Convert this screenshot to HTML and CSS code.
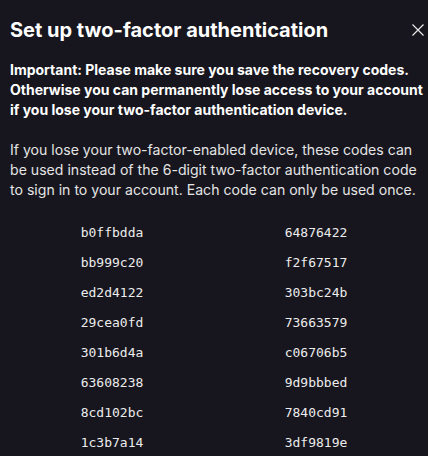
FILE: index.html
```html
<!DOCTYPE html>
<html>
<head>
<meta charset="utf-8">
<link rel="stylesheet" href="styles.css">
</head>
<body>
<div class="dialog">
  <div class="header">
    <h1 class="title">Set up two-factor authentication</h1>
    <button class="close" aria-label="Close">
      <svg width="12" height="12" viewBox="0 0 12 12"><path d="M0.5 0.5L11.5 11.5M11.5 0.5L0.5 11.5" stroke="#e6e6e6" stroke-width="1.2" fill="none"/></svg>
    </button>
  </div>
  <p class="important">Important: Please make sure you save the recovery codes. Otherwise you can permanently lose access to your account if you lose your two-factor authentication device.</p>
  <p class="info">If you lose your two-factor-enabled device, these codes can be used instead of the 6-digit two-factor authentication code to sign in to your account. Each code can only be used once.</p>
  <div class="codes">
    <span>b0ffbdda</span><span>64876422</span>
    <span>bb999c20</span><span>f2f67517</span>
    <span>ed2d4122</span><span>303bc24b</span>
    <span>29cea0fd</span><span>73663579</span>
    <span>301b6d4a</span><span>c06706b5</span>
    <span>63608238</span><span>9d9bbbed</span>
    <span>8cd102bc</span><span>7840cd91</span>
    <span>1c3b7a14</span><span>3df9819e</span>
  </div>
</div>
</body>
</html>
```

FILE: styles.css
```css
html, body {
  margin: 0;
  padding: 0;
  background: #17161e;
}
body {
  font-family: Inter, "Noto Sans", sans-serif;
  color: #ececec;
}
.dialog {
  padding: 0 10px;
}
.header {
  display: flex;
  align-items: center;
  justify-content: space-between;
  height: 60px;
}
.title {
  margin: 0;
  font-size: 20px;
  font-weight: 700;
  color: #ffffff;
}
.close {
  background: none;
  border: 0;
  padding: 0;
  width: 12px;
  height: 12px;
  margin-right: -6px;
  display: flex;
}
.important, .info {
  margin: 0 -8px 0 0;
  line-height: 20px;
}
.important {
  font-size: 14px;
  font-weight: 700;
  color: #ffffff;
  margin-bottom: 20px;
}
.info {
  font-size: 14.1px;
  color: #e4e4e4;
}
.codes {
  display: grid;
  grid-template-columns: 1fr 1fr;
  row-gap: 10px;
  margin-top: 23px;
  font-family: "DejaVu Sans Mono", monospace;
  font-size: 13px;
  line-height: 20px;
  color: #ececec;
  text-align: center;
}
```
